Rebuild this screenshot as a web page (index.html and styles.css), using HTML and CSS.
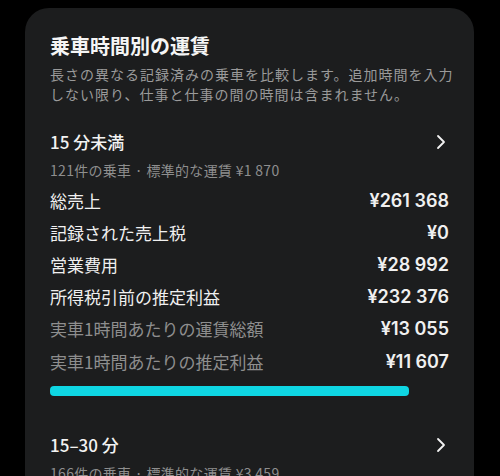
FILE: index.html
```html
<!DOCTYPE html>
<html lang="ja">
<head>
<meta charset="utf-8">
<link rel="stylesheet" href="styles.css">
</head>
<body>
<div class="card">
  <h1 class="title">乗車時間別の運賃</h1>
  <p class="desc">長さの異なる記録済みの乗車を比較します。追加時間を入力<br>しない限り、仕事と仕事の間の時間は含まれません。</p>

  <section class="group">
    <div class="group-head">
      <span class="group-name">15 分未満</span>
      <svg class="chev" viewBox="0 0 10 16" width="10" height="16"><path d="M2 2 L8 8 L2 14" fill="none" stroke="#f2f2f2" stroke-width="1.8" stroke-linecap="round" stroke-linejoin="round"/></svg>
    </div>
    <div class="meta">121件の乗車 · 標準的な運賃 ¥1 870</div>
    <div class="row"><span>総売上</span><span class="val">¥261 368</span></div>
    <div class="row"><span>記録された売上税</span><span class="val">¥0</span></div>
    <div class="row"><span>営業費用</span><span class="val">¥28 992</span></div>
    <div class="row"><span>所得税引前の推定利益</span><span class="val">¥232 376</span></div>
    <div class="row dim"><span>実車1時間あたりの運賃総額</span><span class="val">¥13 055</span></div>
    <div class="row dim"><span>実車1時間あたりの推定利益</span><span class="val">¥11 607</span></div>
    <div class="track"><div class="bar" style="width:90%"></div></div>
  </section>

  <section class="group">
    <div class="group-head">
      <span class="group-name">15–30 分</span>
      <svg class="chev" viewBox="0 0 10 16" width="10" height="16"><path d="M2 2 L8 8 L2 14" fill="none" stroke="#f2f2f2" stroke-width="1.8" stroke-linecap="round" stroke-linejoin="round"/></svg>
    </div>
    <div class="meta">166件の乗車 · 標準的な運賃 ¥3 459</div>
  </section>
</div>
</body>
</html>
```
FILE: styles.css
```css
html, body {
  margin: 0;
  padding: 0;
  background: #000;
}
body {
  font-family: "Noto Sans CJK JP", "Noto Sans", sans-serif;
  color: #f2f2f2;
  height: 476px;
  overflow: hidden;
}
.card {
  margin: 8px 0 0 25px;
  width: 449px;
  box-sizing: border-box;
  background: #1c1d1e;
  border-radius: 24px 24px 0 0;
  padding: 24px 25px 0 25px;
  min-height: 480px;
}
.title {
  margin: 0;
  font-size: 20px;
  font-weight: 700;
  line-height: 28px;
  color: #f5f5f5;
}
.desc {
  margin: 4px 0 0 0;
  font-size: 14px;
  line-height: 20px;
  color: #9a9a9a;
  letter-spacing: 1px;
  white-space: nowrap;
}
.group {
  margin-top: 25px;
}
.group + .group {
  margin-top: 36px;
}
.group-head {
  display: flex;
  justify-content: space-between;
  align-items: center;
  height: 26px;
  padding-right: 3px;
}
.group-name {
  font-size: 17px;
  font-weight: 500;
  line-height: 26px;
}
.meta {
  margin-top: 6px;
  font-size: 14px;
  line-height: 18px;
  color: #8e8e8e;
  letter-spacing: 0.3px;
}
.row {
  display: flex;
  justify-content: space-between;
  align-items: center;
  height: 32px;
  font-size: 17px;
  color: #f0f0f0;
}
.meta + .row { margin-top: 5px; }
.row.dim { height: 33px; }
.row.dim span:first-child {
  color: #8e8e8e;
}
.val {
  font-family: "Inter", "Noto Sans", sans-serif;
  font-weight: 600;
  font-size: 18px;
}
.track {
  margin-top: 8px;
  height: 10px;
}
.bar {
  height: 10px;
  background: #0fd6e3;
  border-radius: 4px;
}
```
